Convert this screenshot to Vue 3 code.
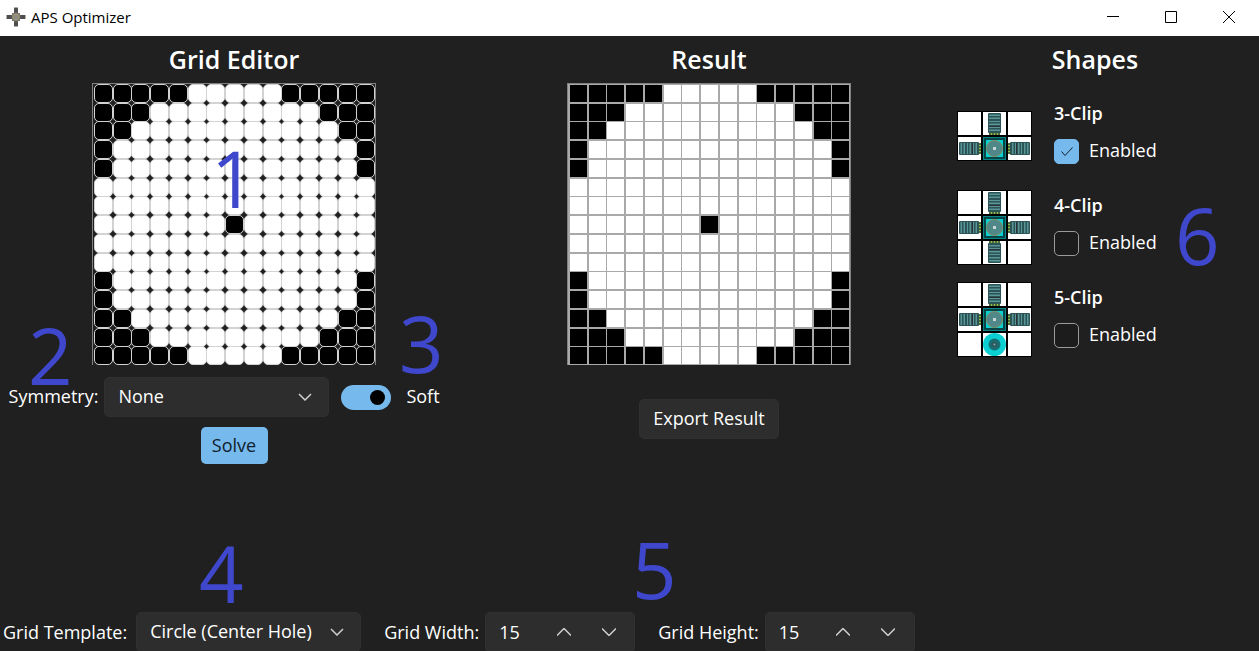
<script setup>
import { ref, reactive } from 'vue'

const blockedPerSide = [5, 3, 2, 1, 1, 0, 0, 0, 0, 0, 1, 1, 2, 3, 5]
const size = 15

function buildCells() {
  const list = []
  for (let row = 0; row < size; row++) {
    for (let col = 0; col < size; col++) {
      const edge = blockedPerSide[row]
      const hole = row === 7 && col === 7
      list.push({ id: row * size + col, row, col, blocked: hole || col < edge || col >= size - edge })
    }
  }
  return list
}

const cells = reactive(buildCells())
const result = buildCells()

const symmetry = ref('None')
const soft = ref(true)
const template = ref('Circle (Center Hole)')
const gridWidth = ref(15)
const gridHeight = ref(15)

const up = 'translate(25 0)'
const left = 'translate(0 25) rotate(-90 12.5 12.5)'
const right = 'translate(50 25) rotate(90 12.5 12.5)'
const down = 'translate(25 50) rotate(180 12.5 12.5)'

const shapes = reactive([
  { name: '3-Clip', rows: 2, enabled: true, clips: [up, left, right], intake: false },
  { name: '4-Clip', rows: 3, enabled: false, clips: [up, left, right, down], intake: false },
  { name: '5-Clip', rows: 3, enabled: false, clips: [up, left, right], intake: true }
])

const markers = [1, 2, 3, 4, 5, 6]
</script>

<template>
  <div class="window">
    <header class="titlebar">
      <svg class="app-icon" width="20" height="20" viewBox="0 0 20 20" aria-hidden="true">
        <path d="M8 .5h4v19H8z" fill="#5a5a58" />
        <path d="M.5 8h19v4H.5z" fill="#5a5a58" />
        <path d="M8 2h4M8 4h4M8 16h4M8 18h4M2 8v4M4 8v4M16 8v4M18 8v4" stroke="#444" stroke-width="1" />
        <rect x="6" y="6" width="8" height="8" fill="#777773" />
        <circle cx="10" cy="10" r="3" fill="#8d8d88" stroke="#a39a6c" stroke-width="1" />
      </svg>
      <span class="app-name">APS Optimizer</span>
      <div class="window-buttons">
        <button type="button" aria-label="Minimize">
          <svg width="12" height="12" viewBox="0 0 12 12"><path d="M0 5.5h12" /></svg>
        </button>
        <button type="button" aria-label="Maximize">
          <svg width="12" height="12" viewBox="0 0 12 12"><path d="M.5.5h11v11H.5z" /></svg>
        </button>
        <button type="button" aria-label="Close">
          <svg width="12" height="12" viewBox="0 0 12 12"><path d="M0 0l12 12M12 0L0 12" /></svg>
        </button>
      </div>
    </header>

    <main class="columns">
      <section class="column">
        <h2>Grid Editor</h2>
        <div class="board editor">
          <button
            v-for="cell in cells"
            :key="cell.id"
            type="button"
            class="cell"
            :class="{ blocked: cell.blocked }"
            :aria-label="`Row ${cell.row + 1}, column ${cell.col + 1}`"
            @click="cell.blocked = !cell.blocked"
          ></button>
        </div>
        <div class="options">
          <label for="symmetry" class="caption">Symmetry:</label>
          <div class="combo">
            <select id="symmetry" v-model="symmetry">
              <option>None</option>
              <option>Horizontal</option>
              <option>Vertical</option>
            </select>
            <svg class="chevron" width="14" height="8" viewBox="0 0 14 8"><path d="M1 1l6 6 6-6" /></svg>
          </div>
          <label class="toggle">
            <input v-model="soft" type="checkbox" role="switch" />
            <span class="caption">Soft</span>
          </label>
        </div>
        <button type="button" class="solve">Solve</button>
      </section>

      <section class="column">
        <h2>Result</h2>
        <div class="board result">
          <span v-for="cell in result" :key="cell.id" class="cell" :class="{ blocked: cell.blocked }"></span>
        </div>
        <button type="button" class="export">Export Result</button>
      </section>

      <section class="column">
        <h2>Shapes</h2>
        <ul class="shapes">
          <li v-for="shape in shapes" :key="shape.name">
            <svg class="shape-art" width="75" :height="shape.rows * 25" :viewBox="`0 0 75 ${shape.rows * 25}`" aria-hidden="true">
              <rect width="75" :height="shape.rows * 25" fill="#000" />
              <template v-for="r in shape.rows" :key="r">
                <rect v-for="c in 3" :key="c" :x="c * 25 - 24" :y="r * 25 - 24" width="23" height="23" fill="#fff" />
              </template>
              <g v-for="place in shape.clips" :key="place" :transform="place">
                <path d="M7 22h11v2H7z" fill="#4c6a3c" />
                <path d="M9.500 22v2M12.500 22v2M15.500 22v2" stroke="#8fc04a" stroke-width="1" />
                <rect x="6" y="2" width="13" height="20" rx="1" fill="#2c5456" />
                <path d="M7 4.500h11M7 7.500h11M7 10.500h11M7 13.500h11M7 16.500h11M7 19.500h11" stroke="#5b9696" stroke-width="1" />
                <path d="M7 3.500h11M7 6.500h11M7 12.500h11M7 18.500h11" stroke="#3e7274" stroke-width="1" />
                <path d="M7 15.500h11" stroke="#2f3038" stroke-width="1" />
              </g>
              <g v-if="shape.intake">
                <circle cx="37.5" cy="62.5" r="11.5" fill="#0bcfd1" />
                <circle cx="37.5" cy="62.5" r="6" fill="#176f73" />
                <circle cx="37.5" cy="62.5" r="3" fill="#2d5a5f" />
                <circle cx="37.5" cy="62.5" r="1" fill="#8aa9a9" />
              </g>
              <rect x="26" y="26" width="23" height="23" fill="#0a8587" />
              <rect x="28" y="28" width="19" height="19" fill="#0bd0d0" stroke="#064648" stroke-width="2" />
              <circle cx="37.5" cy="37.5" r="8" fill="#508789" stroke="#858b60" stroke-width="1" />
              <rect x="36" y="36" width="3" height="3" fill="#c9d6d6" />
            </svg>
            <div class="shape-info">
              <h3>{{ shape.name }}</h3>
              <label class="check">
                <span class="box">
                  <input v-model="shape.enabled" type="checkbox" />
                  <svg v-if="shape.enabled" width="12" height="10" viewBox="0 0 12 10"><path d="M.5 5.500l3.500 4L11.500 1.500" /></svg>
                </span>
                <span class="caption">Enabled</span>
              </label>
            </div>
          </li>
        </ul>
      </section>
    </main>

    <footer class="settings">
      <div class="field">
        <label for="template">Grid Template:</label>
        <div class="combo">
          <select id="template" v-model="template">
            <option>Circle (Center Hole)</option>
            <option>Circle</option>
            <option>None</option>
          </select>
          <svg class="chevron" width="14" height="8" viewBox="0 0 14 8"><path d="M1 1l6 6 6-6" /></svg>
        </div>
      </div>
      <div class="field">
        <label for="grid-width">Grid Width:</label>
        <div class="number">
          <input id="grid-width" v-model.number="gridWidth" type="text" inputmode="numeric" />
          <button type="button" aria-label="Increase width" @click="gridWidth++">
            <svg width="14" height="8" viewBox="0 0 14 8"><path d="M0 7.500l7-7 7 7" /></svg>
          </button>
          <button type="button" aria-label="Decrease width" @click="gridWidth--">
            <svg width="14" height="8" viewBox="0 0 14 8"><path d="M0 .5l7 7 7-7" /></svg>
          </button>
        </div>
      </div>
      <div class="field">
        <label for="grid-height">Grid Height:</label>
        <div class="number">
          <input id="grid-height" v-model.number="gridHeight" type="text" inputmode="numeric" />
          <button type="button" aria-label="Increase height" @click="gridHeight++">
            <svg width="14" height="8" viewBox="0 0 14 8"><path d="M0 7.500l7-7 7 7" /></svg>
          </button>
          <button type="button" aria-label="Decrease height" @click="gridHeight--">
            <svg width="14" height="8" viewBox="0 0 14 8"><path d="M0 .5l7 7 7-7" /></svg>
          </button>
        </div>
      </div>
    </footer>

    <span v-for="n in markers" :key="n" class="marker" :class="`marker-${n}`">{{ n }}</span>
  </div>
</template>

<style>
body {
  margin: 0;
  background: #202020;
}
</style>

<style scoped>
.window {
  position: relative;
  display: flex;
  flex-direction: column;
  height: 100vh;
  overflow: hidden;
  background: #202020;
  color: #fff;
  font: 18px/24px "Open Sans", "Noto Sans", sans-serif;
}

button,
input,
select {
  margin: 0;
  padding: 0;
  border: 0;
  font: inherit;
  color: inherit;
  background: none;
}

h2,
h3 {
  margin: 0;
  font-weight: 600;
}

.caption {
  padding-bottom: 2px;
}

.titlebar {
  display: flex;
  flex: none;
  align-items: center;
  box-sizing: border-box;
  height: 36px;
  padding: 0 1px 2px 6px;
  background: #fff;
  color: #000;
}

.app-icon {
  margin-right: 5px;
}

.app-name {
  font-size: 15px;
  line-height: 20px;
}

.window-buttons {
  display: flex;
  margin-left: auto;
}

.window-buttons button {
  display: grid;
  place-items: center;
  width: 58px;
  height: 34px;
}

.window-buttons path {
  fill: none;
  stroke: #000;
  stroke-width: 1;
}

.columns {
  display: grid;
  grid-template-columns: 1fr 1fr 290px;
  gap: 7px;
  flex: 1;
  padding-right: 19px;
}

.column {
  display: flex;
  flex-direction: column;
  align-items: center;
}

h2 {
  font-size: 25px;
  line-height: 47px;
}

.board {
  display: grid;
  grid-template-columns: repeat(15, minmax(0, 1fr));
  grid-template-rows: repeat(15, minmax(0, 1fr));
  box-sizing: border-box;
  width: 284px;
  height: 282px;
  padding-left: 1px;
  border: 1px solid #808080;
  border-bottom: 0;
}

.editor .cell {
  box-sizing: border-box;
  width: 19px;
  height: 19px;
  border: 1px solid #d3d3d3;
  border-radius: 5px;
  background: #fff;
}

.result {
  background: #a9a9a9;
}

.result .cell {
  width: 17px;
  height: 17px;
  margin: 1px 0 0 1px;
  background: #fff;
}

.editor .blocked,
.result .blocked {
  background: #000;
}

.options {
  display: flex;
  align-items: center;
  margin: 12px 0 10px;
}

.combo {
  display: grid;
  align-items: center;
  width: 225px;
  margin-left: 6px;
}

.combo select {
  grid-area: 1 / 1;
  box-sizing: border-box;
  width: 100%;
  height: 40px;
  padding: 0 40px 2px 13px;
  appearance: none;
  border: 1px solid #303030;
  border-radius: 5px;
  background: #2d2d2d;
}

.chevron {
  grid-area: 1 / 1;
  justify-self: end;
  margin-right: 17px;
  pointer-events: none;
}

.chevron path,
.number path {
  fill: none;
  stroke: #cfcfcf;
  stroke-width: 1.5;
}

.toggle {
  display: flex;
  align-items: center;
  gap: 15px;
  min-width: 118px;
  margin-left: 12px;
}

.toggle input {
  display: grid;
  align-items: center;
  box-sizing: border-box;
  width: 50px;
  height: 25px;
  padding: 0 6px;
  appearance: none;
  border-radius: 13px;
  background: #76b9ed;
}

.toggle input::before {
  content: "";
  width: 15px;
  height: 15px;
  border-radius: 50%;
  background: #000;
}

.toggle input:checked::before {
  justify-self: end;
}

.solve {
  width: 67px;
  height: 37px;
  padding-bottom: 2px;
  border-radius: 5px;
  background: #76b9ed;
  color: #10202c;
}

.export {
  box-sizing: border-box;
  height: 40px;
  margin-top: 34px;
  padding: 0 13px 2px;
  border: 1px solid #303030;
  border-radius: 5px;
  background: #2d2d2d;
}

.shapes {
  align-self: stretch;
  margin: 7px 0 0;
  padding: 0 0 0 7px;
  list-style: none;
}

.shapes li {
  display: flex;
  align-items: center;
  gap: 22px;
  height: 92px;
}

.shape-art {
  padding-bottom: 1px;
}

h3 {
  margin-bottom: 6px;
  font-size: 18px;
  line-height: 24px;
}

.check {
  display: flex;
  align-items: center;
  gap: 10px;
  height: 40px;
}

.box {
  display: grid;
  place-items: center;
}

.box input {
  grid-area: 1 / 1;
  box-sizing: border-box;
  width: 25px;
  height: 25px;
  appearance: none;
  border: 1px solid #9a9a9a;
  border-radius: 5px;
  background: #1c1c1c;
}

.box input:checked {
  border-color: #76b9ed;
  background: #76b9ed;
}

.box svg {
  grid-area: 1 / 1;
  pointer-events: none;
}

.box path {
  fill: none;
  stroke: #10202c;
  stroke-width: 1;
}

.settings {
  display: flex;
  flex: none;
  align-items: flex-start;
  gap: 23px;
  height: 39px;
  padding-left: 3px;
}

.field {
  display: flex;
  align-items: center;
}

.field .combo {
  margin-left: 9px;
}

.number {
  display: flex;
  box-sizing: border-box;
  width: 150px;
  height: 40px;
  margin-left: 6px;
  padding-right: 3px;
  border: 1px solid #303030;
  border-bottom: 2px solid #303030;
  border-radius: 5px;
  background: #2d2d2d;
}

.number input {
  flex: 1;
  min-width: 0;
  padding-left: 13px;
}

.number button {
  display: grid;
  place-items: center;
  width: 45px;
}

.marker {
  position: absolute;
  color: #3f48cc;
  font-size: 78px;
  line-height: 80px;
  pointer-events: none;
}

.marker-1 {
  top: 138px;
  left: 211px;
}

.marker-2 {
  top: 315px;
  left: 28px;
}

.marker-3 {
  top: 303px;
  left: 399px;
}

.marker-4 {
  top: 533px;
  left: 199px;
}

.marker-5 {
  top: 529px;
  left: 632px;
}

.marker-6 {
  top: 195px;
  left: 1175px;
}
</style>
